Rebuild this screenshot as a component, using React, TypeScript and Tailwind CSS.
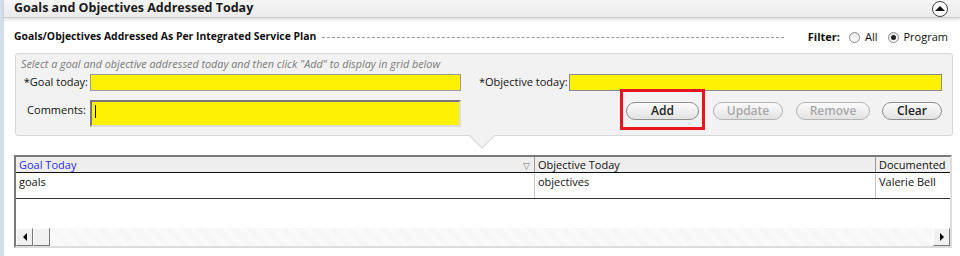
import React from "react";

const font = { fontFamily: '"Open Sans", "Noto Sans", sans-serif' };

const Radio = ({ checked }: { checked?: boolean }) => (
  <span className="inline-flex items-center justify-center w-[11px] h-[11px] rounded-full border border-[#8a8a8a] bg-gradient-to-b from-[#e6e6e6] to-white">
    {checked && <span className="w-[5px] h-[5px] rounded-full bg-[#222]" />}
  </span>
);

const Btn = ({ label, width, disabled }: { label: string; width: string; disabled?: boolean }) => (
  <button
    className={`${width} h-[18px] rounded-full border bg-gradient-to-b from-[#fbfbfb] to-[#e2e2e2] text-[12px] font-semibold leading-none ${
      disabled ? "text-[#a8a8a8] border-[#b4b4b4]" : "text-[#222] border-[#8e8e8e]"
    }`}
  >
    {label}
  </button>
);

const App: React.FC = () => {
  return (
    <div className="w-[960px] h-[256px] bg-white flex overflow-hidden text-[#111]" style={font}>
      <div className="w-[4px] shrink-0 bg-[#d4deec]" />
      <div className="flex-1 min-w-0 flex flex-col">
        {/* header */}
        <div className="h-[18px] flex items-center justify-between pl-[10px] pr-[12px] bg-gradient-to-b from-[#f6f6f6] to-[#ebebeb] border-b border-[#c8c8c8] shadow-[0_2px_3px_rgba(0,0,0,0.12)]">
          <h1 className="text-[12.5px] font-bold text-[#1a1a1a] leading-none">Goals and Objectives Addressed Today</h1>
          <span className="w-[16px] h-[16px] rounded-full border border-[#444] bg-white flex items-center justify-center">
            <span className="w-0 h-0 border-l-[5px] border-r-[5px] border-b-[5px] border-l-transparent border-r-transparent border-b-[#111] -mt-[1px]" />
          </span>
        </div>

        {/* section line */}
        <div className="mt-[12px] h-[14px] flex items-center pl-[10px] pr-[12px] text-[11px]">
          <span className="font-bold whitespace-nowrap text-[10.4px]">Goals/Objectives Addressed As Per Integrated Service Plan</span>
          <span className="ml-[6px] w-[462px] border-t border-dashed border-[#9a9a9a]" />
          <span className="ml-auto font-bold">Filter:</span>
          <span className="ml-[9px] flex items-center gap-[5px]">
            <Radio />
            All
          </span>
          <span className="ml-[10px] flex items-center gap-[5px]">
            <Radio checked />
            Program
          </span>
        </div>

        {/* entry panel */}
        <div className="relative mt-[9px] ml-[11px] w-[938px] h-[83px] bg-[#f2f2f2] border border-[#d6d6d6] rounded-[3px] pl-[5px] pr-[10px] pt-[3px]">
          <p className="text-[10.8px] italic text-[#7a7a7a] leading-[14px] whitespace-nowrap">
            Select a goal and objective addressed today and then click "Add" to display in grid below
          </p>
          <div className="mt-[3px] flex">
            <div className="w-[440px] flex flex-col gap-[9px]">
              <div className="flex items-center">
                <label className="w-[69px] text-right pr-[2px] text-[11px] whitespace-nowrap">*Goal today:</label>
                <div className="flex-1 h-[17px] bg-[#fff200] border border-[#9a9a9a]" />
              </div>
              <div className="flex items-start">
                <label className="w-[69px] text-right pr-[4px] text-[11px] mt-[2px]">Comments:</label>
                <div className="flex-1 h-[27px] bg-[#fff200] border-2 border-[#777] border-r-[#ddd] border-b-[#ddd] pl-[3px] pt-[3px]">
                  <span className="block w-px h-[13px] bg-black" />
                </div>
              </div>
            </div>
            <div className="ml-[18px] flex-1 flex flex-col">
              <div className="flex items-center">
                <label className="w-[90px] text-[11px] whitespace-nowrap">*Objective today:</label>
                <div className="flex-1 h-[17px] bg-[#fff200] border border-[#8a8a8a]" />
              </div>
              <div className="mt-[6px] flex justify-end">
                <div className="relative">
                  <Btn label="Add" width="w-[73px]" />
                  <span className="absolute -left-[6px] -right-[6px] -top-[8px] -bottom-[9px] border-[3px] border-[#e8141e]" />
                </div>
                <div className="ml-[14px]">
                  <Btn label="Update" width="w-[70px]" disabled />
                </div>
                <div className="ml-[13px]">
                  <Btn label="Remove" width="w-[74px]" disabled />
                </div>
                <div className="ml-[12px]">
                  <Btn label="Clear" width="w-[60px]" />
                </div>
              </div>
            </div>
          </div>
          {/* pointer */}
          <div className="absolute left-[457px] -bottom-[10px] w-[18px] h-[18px] rotate-45 bg-[#f2f2f2] border-r border-b border-[#d6d6d6]" />
        </div>

        {/* grid */}
        <div className="mt-[19px] ml-[10px] w-[938px] h-[93px] border-2 border-[#7a7a7a] border-r-[#dcdcdc] border-b-[#dcdcdc] flex flex-col text-[11px]">
          <div className="h-[16px] flex bg-[#eeeeee] border-b border-[#111] leading-[15px]">
            <div className="w-[519px] pl-[3px] text-[#2b2bff] relative border-r border-[#999]">
              Goal Today
              <span className="absolute right-[4px] top-[1px] text-[9px] text-[#777]">▽</span>
            </div>
            <div className="w-[341px] pl-[3px] border-r border-[#999]">Objective Today</div>
            <div className="flex-1 pl-[3px] whitespace-nowrap overflow-hidden">Documented</div>
          </div>
          <div className="h-[26px] flex border-b border-[#333] leading-[15px] pt-[1px]">
            <div className="w-[519px] pl-[3px] border-r border-[#c4c4c4]">goals</div>
            <div className="w-[341px] pl-[3px] border-r border-[#c4c4c4]">objectives</div>
            <div className="flex-1 pl-[3px] whitespace-nowrap overflow-hidden">Valerie Bell</div>
          </div>
          <div className="flex-1" />
          <div className="h-[18px] flex bg-[repeating-linear-gradient(45deg,#f4f4f4_0,#f4f4f4_1px,#fcfcfc_1px,#fcfcfc_2px)]">
            <div className="w-[17px] h-[18px] border border-[#777] border-t-white border-l-white bg-[#f0f0f0] flex items-center justify-center">
              <span className="w-0 h-0 border-t-[4px] border-b-[4px] border-r-[4px] border-t-transparent border-b-transparent border-r-black" />
            </div>
            <div className="w-[17px] h-[18px] border border-[#777] border-t-white border-l-white bg-[#f0f0f0]" />
            <div className="flex-1" />
            <div className="w-[17px] h-[18px] border border-[#777] border-t-white border-l-white bg-[#f0f0f0] flex items-center justify-center">
              <span className="w-0 h-0 border-t-[4px] border-b-[4px] border-l-[4px] border-t-transparent border-b-transparent border-l-black" />
            </div>
          </div>
        </div>
      </div>
    </div>
  );
};

export default App;
